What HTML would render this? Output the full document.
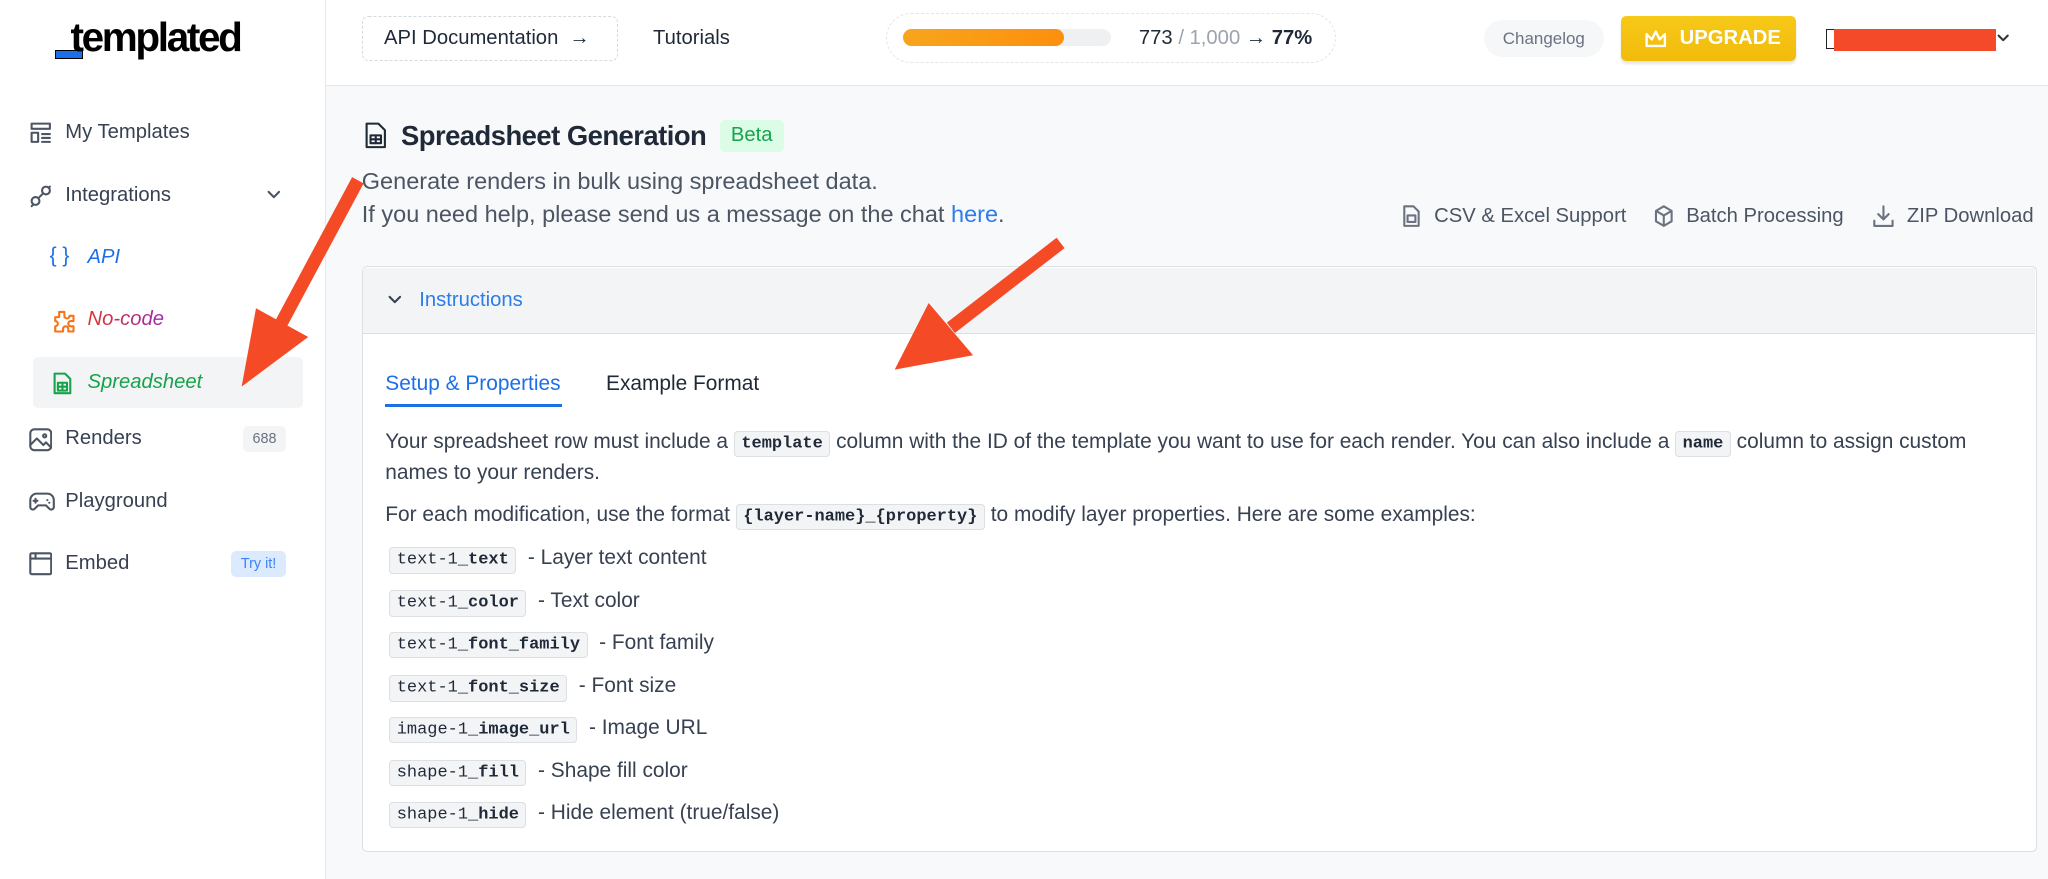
<!DOCTYPE html>
<html><head><meta charset="utf-8">
<style>
html,body{margin:0;padding:0;}
body{width:2048px;height:879px;overflow:hidden;background:#f8f9fb;font-family:"Liberation Sans",sans-serif;}
#w{position:absolute;left:0;top:0;width:1568px;height:673px;zoom:1.30612;background:#f8f9fb;color:#1f2937;}
.a{position:absolute;white-space:nowrap;}
.code{font-family:"Liberation Mono",monospace;font-size:13px;background:#f3f4f6;border:1px solid #dcdfe4;border-radius:3px;padding:2px 5px;color:#1f2937;}
.code b{font-weight:bold;}
.li{position:absolute;left:298px;font-size:16px;color:#374151;}
.side{position:absolute;left:50px;font-size:15.5px;color:#374151;}
svg.i{position:absolute;fill:none;stroke-width:1.6;stroke-linecap:round;stroke-linejoin:round;}
</style></head><body><div id="w">
<!-- header -->
<div class="a" style="left:0;top:0;width:1568px;height:65px;background:#fff;border-bottom:1px solid #e5e7eb;"></div>
<div class="a" style="left:0;top:65px;width:249px;height:608px;background:#fff;border-right:1px solid #e5e7eb;"></div>
<div class="a" style="left:249px;top:0;height:65px;border-left:1px solid #e5e7eb;"></div>
<div class="a" style="left:42px;top:38px;width:20px;height:6px;background:#1d6fe8;border:1px solid #000;"></div>
<div class="a" style="left:54px;top:11px;font-size:31px;font-weight:bold;letter-spacing:-1.8px;color:#000;">templated</div>
<div class="a" style="left:277px;top:12px;width:195px;height:33px;border:1.5px dashed #d6d9de;border-radius:5px;"></div>
<div class="a" style="left:294px;top:21px;font-size:15.5px;color:#1f2937;">API Documentation &nbsp;→</div>
<div class="a" style="left:500px;top:21px;font-size:15.5px;color:#1f2937;">Tutorials</div>
<div class="a" style="left:678px;top:10px;width:343px;height:37px;border:1.5px dashed #e3e5e8;border-radius:20px;"></div>
<div class="a" style="left:691px;top:22px;width:160px;height:13px;background:#eef0f2;border-radius:7px;"></div>
<div class="a" style="left:691px;top:22px;width:124px;height:13px;background:linear-gradient(90deg,#f7a51c,#fd8f0e);border-radius:7px;"></div>
<div class="a" style="left:872px;top:21px;font-size:15.5px;color:#1f2937;">773 <span style="color:#9ca3af">/ 1,000</span> → <b>77%</b></div>
<div class="a" style="left:1136px;top:15px;width:92px;height:29px;background:#f6f7f8;border-radius:15px;font-size:13px;color:#6b7280;text-align:center;line-height:29px;">Changelog</div>
<div class="a" style="left:1241px;top:12px;width:134px;height:35px;background:linear-gradient(#f7c918,#f1bb0c);border-radius:4px;box-shadow:0 2px 2px rgba(0,0,0,.1);"></div>
<svg class="i" style="left:1259px;top:22px;" width="18" height="16" viewBox="0 0 18 16"><path d="M2 4l4 4 3-6 3 6 4-4v9H2z" stroke="#fff" stroke-width="1.8"/></svg>
<div class="a" style="left:1286px;top:21px;font-size:15.5px;font-weight:bold;color:#fff;">UPGRADE</div>
<div class="a" style="left:1398px;top:22px;width:6px;height:14px;border:1.5px solid #222;"></div>
<div class="a" style="left:1404px;top:22px;width:124px;height:17px;background:#f54a2a;"></div>
<svg class="i" style="left:1528px;top:25px;" width="11" height="8" viewBox="0 0 11 8" stroke="#333"><path d="M2 2l3.5 3.5L9 2"/></svg>

<!-- sidebar -->
<svg class="i" style="left:22px;top:93px;" width="18" height="18" viewBox="0 0 18 18" stroke="#4b5563"><rect x="2" y="2" width="14" height="4"/><rect x="2" y="9" width="5" height="7"/><path d="M10 10h6M10 13h6M10 16h6"/></svg>
<div class="side" style="top:93px;">My Templates</div>
<svg class="i" style="left:22px;top:141px;" width="18" height="18" viewBox="0 0 18 18" stroke="#4b5563"><circle cx="13" cy="5" r="3"/><circle cx="5" cy="13" r="3"/><path d="M3 16l-1 1M15 3l1-1M8 10l2-2"/></svg>
<div class="side" style="top:141px;">Integrations</div>
<svg class="i" style="left:204px;top:144px;" width="12" height="10" viewBox="0 0 12 10" stroke="#4b5563"><path d="M2 3l4 4 4-4"/></svg>
<div class="a" style="left:38px;top:187px;font-size:16px;color:#1d6fe8;">{ }</div>
<div class="a" style="left:67px;top:188px;font-size:15.5px;font-style:italic;color:#1d6fe8;">API</div>
<svg class="i" style="left:38px;top:236px;" width="20" height="20" viewBox="0 0 20 20" stroke="#f97316"><path d="M7 3h4v3a2 2 0 104 0V6h3v4h-2a2 2 0 000 4h2v4h-4v-2a2 2 0 10-4 0v2H4v-4a2 2 0 000-4V7h3z"/></svg>
<div class="a" style="left:67px;top:236px;font-size:15.5px;font-style:italic;background:linear-gradient(90deg,#e0322a,#9b2bb3);-webkit-background-clip:text;color:transparent;">No-code</div>
<div class="a" style="left:25px;top:273px;width:207px;height:39px;background:#f3f4f6;border-radius:4px;"></div>
<svg class="i" style="left:40px;top:284px;" width="16" height="19" viewBox="0 0 16 19" stroke="#16a34a"><path d="M2 2h8l4 4v11H2z"/><rect x="4.5" y="9" width="7" height="6"/><path d="M8 9v6M4.5 12h7"/></svg>
<div class="a" style="left:67px;top:284px;font-size:15.5px;font-style:italic;color:#16a34a;">Spreadsheet</div>
<svg class="i" style="left:22px;top:328px;" width="18" height="18" viewBox="0 0 18 18" stroke="#4b5563"><rect x="1" y="1" width="16" height="16" rx="3"/><path d="M1 13l5-5 5 5 2-2 4 4"/><circle cx="12" cy="6" r="1.2"/></svg>
<div class="side" style="top:327px;">Renders</div>
<div class="a" style="left:186px;top:326px;width:33px;height:20px;background:#f3f4f6;border-radius:4px;font-size:11px;color:#6b7280;text-align:center;line-height:20px;">688</div>
<svg class="i" style="left:22px;top:376px;" width="20" height="16" viewBox="0 0 20 16" stroke="#4b5563"><path d="M6 2h8a5 5 0 015 5l0 5a2 2 0 01-3.5 1.5L13 11H7l-2.5 2.5A2 2 0 011 12V7a5 5 0 015-5z"/><path d="M5 6v3M3.5 7.5h3M14 7h.1M15.5 9h.1"/></svg>
<div class="side" style="top:375px;">Playground</div>
<svg class="i" style="left:22px;top:423px;" width="18" height="18" viewBox="0 0 18 18" stroke="#4b5563"><rect x="1" y="1" width="16" height="16" rx="1"/><path d="M1 5h16M5 1v4"/></svg>
<div class="side" style="top:423px;">Embed</div>
<div class="a" style="left:177px;top:422px;width:42px;height:20px;background:#dbeafe;border-radius:4px;font-size:11px;color:#3b82f6;text-align:center;line-height:20px;">Try it!</div>

<!-- main -->
<svg class="i" style="left:279px;top:93px;" width="18" height="22" viewBox="0 0 18 22" stroke="#1f2937" stroke-width="2"><path d="M2 2h9l5 5v13H2z"/><rect x="5" y="11" width="8" height="6"/><path d="M9 11v6M5 14h8"/></svg>
<div class="a" style="left:307px;top:92px;font-size:21px;font-weight:bold;color:#1f2937;letter-spacing:-.4px;">Spreadsheet Generation</div>
<div class="a" style="left:551px;top:92px;width:49px;height:24px;background:#dcfce7;border-radius:4px;font-size:15.5px;color:#16a34a;text-align:center;line-height:24px;">Beta</div>
<div class="a" style="left:277px;top:129px;font-size:18px;color:#4b5563;">Generate renders in bulk using spreadsheet data.</div>
<div class="a" style="left:277px;top:154px;font-size:18px;color:#4b5563;">If you need help, please send us a message on the chat <span style="color:#2b7de9">here</span>.</div>
<svg class="i" style="left:1074px;top:157px;" width="13" height="17" viewBox="0 0 13 17" stroke="#6b7280" stroke-width="1.3"><path d="M1 1h7l4 4v11H1z"/><rect x="3.5" y="8" width="6" height="5"/></svg>
<div class="a" style="left:1098px;top:157px;font-size:15.5px;color:#4b5563;">CSV &amp; Excel Support</div>
<svg class="i" style="left:1266px;top:157px;" width="15" height="17" viewBox="0 0 15 17" stroke="#6b7280" stroke-width="1.3"><path d="M7.5 1l6 3.5v8L7.5 16l-6-3.5v-8zM1.5 4.5l6 3.5 6-3.5M7.5 8v8"/></svg>
<div class="a" style="left:1291px;top:157px;font-size:15.5px;color:#4b5563;">Batch Processing</div>
<svg class="i" style="left:1434px;top:157px;" width="16" height="17" viewBox="0 0 16 17" stroke="#6b7280" stroke-width="1.3"><path d="M8 1v10M4 7l4 4 4-4M1 12v4h14v-4"/></svg>
<div class="a" style="left:1460px;top:157px;font-size:15.5px;color:#4b5563;">ZIP Download</div>

<div class="a" style="left:277px;top:204px;width:1281px;height:447px;border:1px solid #dcdfe4;border-radius:4px;background:#fff;"></div>
<div class="a" style="left:278px;top:205px;width:1280px;height:50px;background:#f3f4f6;border-bottom:1px solid #dcdfe4;"></div>
<svg class="i" style="left:296px;top:224px;" width="12" height="10" viewBox="0 0 12 10" stroke="#374151"><path d="M2 3l4 4 4-4"/></svg>
<div class="a" style="left:321px;top:221px;font-size:15.5px;color:#2b7de9;">Instructions</div>
<div class="a" style="left:295px;top:285px;font-size:16px;color:#1d6fe8;">Setup &amp; Properties</div>
<div class="a" style="left:295px;top:309px;width:135px;height:3px;background:#1d6fe8;"></div>
<div class="a" style="left:464px;top:285px;font-size:16px;color:#1f2937;">Example Format</div>
<div class="a" style="left:295px;top:329px;font-size:16px;color:#374151;">Your spreadsheet row must include a <span class="code"><b>template</b></span> column with the ID of the template you want to use for each render. You can also include a <span class="code"><b>name</b></span> column to assign custom</div>
<div class="a" style="left:295px;top:353px;font-size:16px;color:#374151;">names to your renders.</div>
<div class="a" style="left:295px;top:385px;font-size:16px;color:#374151;">For each modification, use the format <span class="code"><b>{layer-name}_{property}</b></span> to modify layer properties. Here are some examples:</div>
<div class="li" style="top:418px;"><span class="code">text-1_<b>text</b></span> &nbsp;- Layer text content</div>
<div class="li" style="top:451px;"><span class="code">text-1_<b>color</b></span> &nbsp;- Text color</div>
<div class="li" style="top:483px;"><span class="code">text-1_<b>font_family</b></span> &nbsp;- Font family</div>
<div class="li" style="top:516px;"><span class="code">text-1_<b>font_size</b></span> &nbsp;- Font size</div>
<div class="li" style="top:548px;"><span class="code">image-1_<b>image_url</b></span> &nbsp;- Image URL</div>
<div class="li" style="top:581px;"><span class="code">shape-1_<b>fill</b></span> &nbsp;- Shape fill color</div>
<div class="li" style="top:613px;"><span class="code">shape-1_<b>hide</b></span> &nbsp;- Hide element (true/false)</div>

<!-- arrows -->
<svg class="a" style="left:0;top:0;" width="1568" height="673">
<g fill="#f44a26" stroke="#f44a26">
<line x1="274" y1="138" x2="214" y2="250" stroke-width="10"/>
<polygon points="185,296 196,236 236,258" stroke="none"/>
<line x1="812" y1="186" x2="728" y2="251" stroke-width="10"/>
<polygon points="685,283 711,232 745,272" stroke="none"/>
</g></svg>
</div></body></html>
